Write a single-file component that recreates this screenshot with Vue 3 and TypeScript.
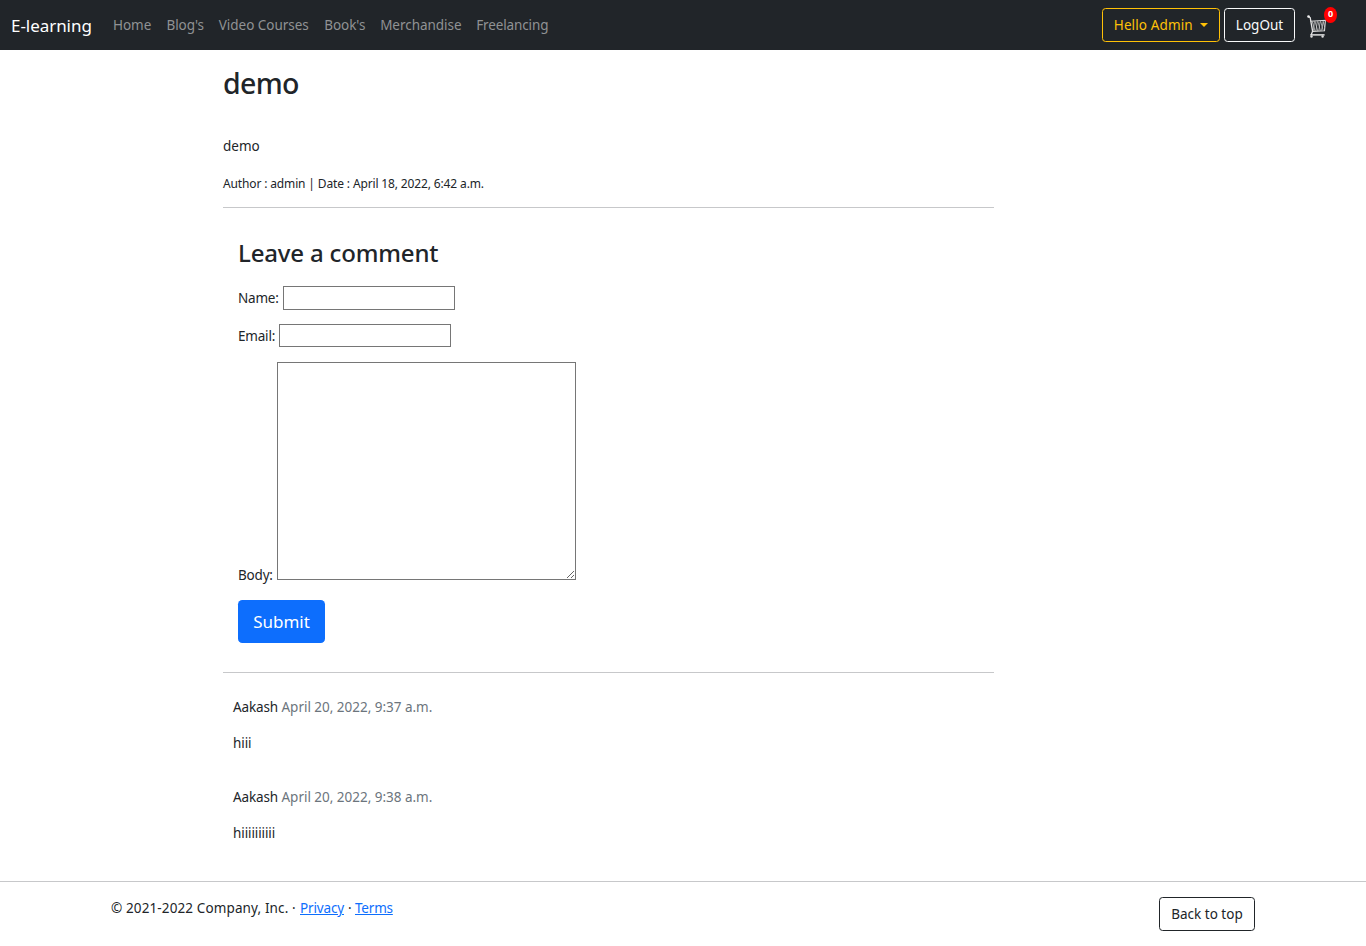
<script setup lang="ts">
interface NavItem { label: string; width: number }
interface Comment { author: string; date: string; body: string }

const navItems: NavItem[] = [
  { label: 'Home', width: 39 },
  { label: "Blog's", width: 38 },
  { label: 'Video Courses', width: 91 },
  { label: "Book's", width: 41.6 },
  { label: 'Merchandise', width: 81.6 },
  { label: 'Freelancing', width: 74 },
]
const comments: Comment[] = [
  { author: 'Aakash', date: 'April 20, 2022, 9:37 a.m.', body: 'hiii' },
  { author: 'Aakash', date: 'April 20, 2022, 9:38 a.m.', body: 'hiiiiiiiiii' },
]
</script>

<template>
  <div class="page">
    <nav class="navbar">
      <a class="brand">E-learning</a>
      <ul class="links">
        <li v-for="item in navItems" :key="item.label" :style="{ width: item.width + 'px' }">{{ item.label }}</li>
      </ul>
      <div class="actions">
        <button class="btn hello">Hello Admin<i class="caret"></i></button>
        <button class="btn logout">LogOut</button>
        <a class="cart">
          <svg width="20" height="26" viewBox="0 0 20 26" fill="none">
            <path d="M1.2 3.4 3.2 4.6 5.6 18.3 4.2 21.8" stroke="#e4e4e4" stroke-width="1.3" />
            <path d="M3.6 8.2 18.4 7.3 17.5 17.8 5.6 18.4" stroke="#dcdcdc" stroke-width="1.1" />
            <path d="M5.2 8.5 8 17.8M8 8.3l2.7 9.5M10.8 8.2l2.6 9.5M13.6 8l2.6 9.5M16 8l1.6 6M7.4 8.5 6.5 17.5M10.3 8.5 9 17.5M13.2 8.5 11.8 17.5M16.2 8.5 14.5 17.5" stroke="#cfcfcf" stroke-width=".75" />
            <path d="M3.3 21.9H17.6" stroke="#eee" stroke-width="1.4" />
            <circle cx="1.5" cy="3.5" r="1.3" fill="#eee" />
            <circle cx="4.5" cy="23.5" r="1.2" fill="#ddd" />
            <circle cx="15.6" cy="23.5" r="1.2" fill="#ddd" />
          </svg>
          <span class="badge">0</span>
        </a>
      </div>
    </nav>

    <main class="content">
      <h1>demo</h1>
      <p class="post">demo</p>
      <p class="meta">Author : admin | Date : April 18, 2022, 6:42 a.m.</p>
      <form class="form" @submit.prevent>
        <h2>Leave a comment</h2>
        <div class="field name"><label for="name">Name:</label><input id="name" type="text" /></div>
        <div class="field email"><label for="email">Email:</label><input id="email" type="text" /></div>
        <div class="field body"><label for="body">Body:</label><textarea id="body"></textarea></div>
        <button class="submit">Submit</button>
      </form>
      <section class="comments">
        <article v-for="c in comments" :key="c.date">
          <p class="byline"><span class="author">{{ c.author }}</span><span class="date">{{ c.date }}</span></p>
          <p class="text">{{ c.body }}</p>
        </article>
      </section>
    </main>

    <footer class="footer">
      <p class="copy"><span class="company">© 2021-2022 Company, Inc. ·</span><a class="privacy" href="#">Privacy</a><span class="dot">·</span><a class="terms" href="#">Terms</a></p>
      <button class="btn top">Back to top</button>
    </footer>
  </div>
</template>

<style>
body { margin: 0; background: #fff; overflow: hidden; }
</style>

<style scoped>
* { box-sizing: border-box; }
.page { width: 100%; height: 946px; font-family: "Noto Sans", "Open Sans", sans-serif; font-size: 13.5px; line-height: 22px; color: #212529; white-space: nowrap; display: flex; flex-direction: column; }
h1, h2, p, ul { margin: 0; padding: 0; font-weight: 400; }
button, input, textarea { font-family: inherit; margin: 0; }
.navbar { height: 50px; flex: none; background: #212529; display: flex; align-items: center; padding: 0 29px 0 11px; }
.brand { width: 102px; color: #fff; font-size: 17px; letter-spacing: -.05px; line-height: 27px; padding-top: 1px; }
.links { display: flex; gap: 14.4px; list-style: none; color: #909294; letter-spacing: -.03px; }
.links li:last-child { letter-spacing: -.12px; }
.actions { margin-left: auto; display: flex; align-items: center; }
.btn { height: 34px; border-radius: 3.6px; background: transparent; font-size: 13.5px; line-height: 22px; padding: 0; display: flex; align-items: center; justify-content: center; }
.hello { width: 118px; border: 1px solid #ffc107; color: #ffc107; margin-right: 4px; letter-spacing: .12px; }
.caret { border: 4px solid transparent; border-top-color: #ffc107; border-bottom: 0; margin-left: 7.5px; }
.logout { width: 71px; border: 1px solid #f8f9fa; color: #f8f9fa; }
.cart { position: relative; width: 30px; height: 24px; margin-left: 12px; }
.cart svg { display: block; }
.badge { position: absolute; left: 17px; top: -6px; width: 13px; height: 16px; border-radius: 50%; background: #f00; color: #fff; font-size: 9px; font-weight: 700; line-height: 14px; text-align: center; }
.content { width: 771px; height: 831px; margin-left: 223px; }
h1 { height: 85px; padding-top: 16px; font-size: 28.5px; line-height: 35px; font-weight: 500; letter-spacing: -.7px; }
.post { height: 37px; }
.meta { height: 35px; font-size: 12px; line-height: 23px; letter-spacing: -.14px; }
.form { border: solid #c7c8ca; border-width: 1px 0; height: 466px; padding: 28px 0 0 15px; }
h2 { height: 50px; font-size: 24px; line-height: 34px; font-weight: 500; letter-spacing: -.17px; }
.field { display: flex; align-items: flex-start; letter-spacing: -.2px; }
.name { height: 38px; }
.name label { width: 45px; padding-top: 1px; }
.email label { width: 41px; padding-top: 1px; }
.email { height: 38px; }
.body { height: 238px; }
.body label { width: 39px; padding-top: 202px; }
input { width: 172px; height: 24px; border: 1px solid #767676; border-radius: 0; padding: 1px 2px; }
.email input { height: 23px; }
textarea { width: 299px; height: 218px; border: 1px solid #767676; border-radius: 0; padding: 2px; }
.submit { width: 87px; height: 43px; border: 0; border-radius: 4.3px; background: #0d6efd; color: #fff; font-size: 17px; line-height: 27px; padding: 0; display: block; }
.comments { padding: 23px 0 0 10px; }
article { height: 90px; }
.byline { display: flex; height: 36px; }
.author { width: 48.5px; letter-spacing: -.15px; }
.date { color: #6c757d; letter-spacing: -.02px; }
.text { letter-spacing: -.1px; }
.footer { height: 65px; border-top: 1px solid #c7c8ca; padding: 15px 111px 0; display: flex; justify-content: space-between; align-items: flex-start; }
.copy { display: flex; }
.company { width: 189px; letter-spacing: .12px; }
.privacy { letter-spacing: -.15px; margin-right: 4px; }
.terms { letter-spacing: -.2px; }
.dot { width: 7px; }
a { color: #0d6efd; }
.top { width: 96px; border: 1px solid #212529; color: #212529; }
</style>
